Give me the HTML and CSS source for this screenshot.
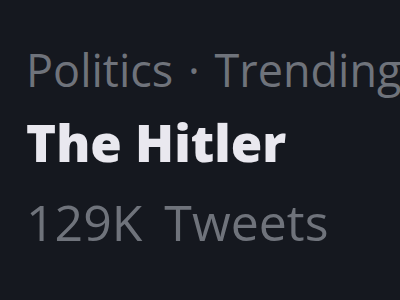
FILE: index.html
```html
<!DOCTYPE html>
<html>
<head>
<meta charset="utf-8">
<link rel="stylesheet" href="styles.css">
</head>
<body>
<div class="trend">
  <div class="meta">Politics · Trending</div>
  <div class="title">The Hitler</div>
  <div class="count">129K Tweets</div>
</div>
</body>
</html>
```
FILE: styles.css
```css
html, body {
  margin: 0;
  padding: 0;
  width: 400px;
  height: 300px;
  overflow: hidden;
  background: #15181f;
}
.trend {
  padding: 33px 0 0 26px;
  font-family: "Open Sans", "Noto Sans", sans-serif;
  white-space: nowrap;
}
.meta {
  color: #6f737b;
  font-size: 45px;
  line-height: 74px;
  word-spacing: 3px;
}
.title {
  color: #e9e8ef;
  font-size: 51px;
  line-height: 70px;
  font-weight: 800;
}
.count {
  color: #6f737b;
  font-size: 50px;
  line-height: 90px;
  word-spacing: 9px;
}
```
